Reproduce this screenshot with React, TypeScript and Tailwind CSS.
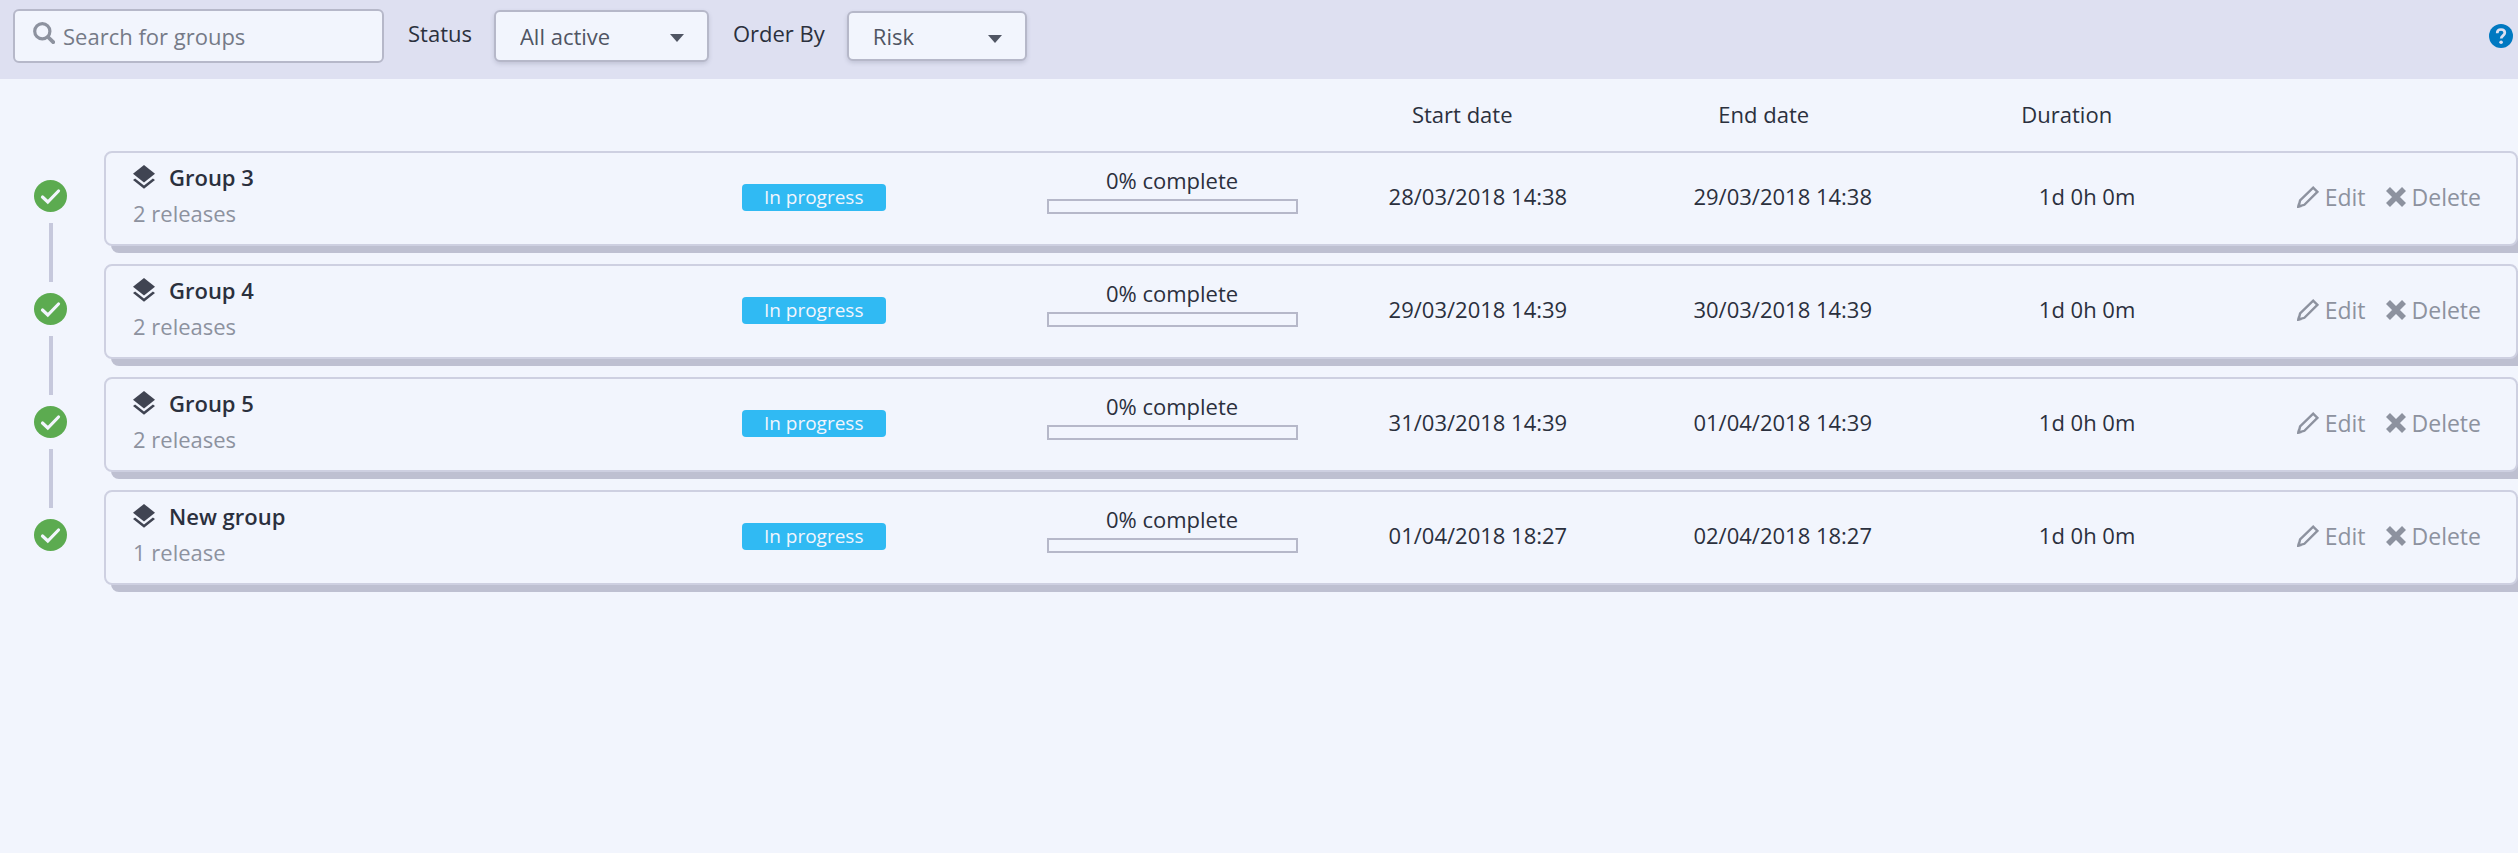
import { useState } from "react";

type Group = { name: string; releases: string; start: string; end: string };

const groups: Group[] = [
  { name: "Group 3", releases: "2 releases", start: "28/03/2018 14:38", end: "29/03/2018 14:38" },
  { name: "Group 4", releases: "2 releases", start: "29/03/2018 14:39", end: "30/03/2018 14:39" },
  { name: "Group 5", releases: "2 releases", start: "31/03/2018 14:39", end: "01/04/2018 14:39" },
  { name: "New group", releases: "1 release", start: "01/04/2018 18:27", end: "02/04/2018 18:27" },
];

const columns =
  "grid grid-cols-[609fr_305fr_251px_28fr_305fr_305fr_304fr_242px] pl-[27px] pr-[35px]";

function SearchIcon() {
  return (
    <svg viewBox="0 0 22 22" className="size-[22px]" fill="none" stroke="#8d929f">
      <circle cx="9.3" cy="9.3" r="7.6" strokeWidth="3.2" />
      <path d="M15 15l5.2 5.2" strokeWidth="3.8" strokeLinecap="round" />
    </svg>
  );
}

function CheckIcon() {
  return (
    <svg viewBox="0 0 33 32" className="h-8 w-[33px]">
      <ellipse cx="16.5" cy="16" rx="16.5" ry="16" fill="#5cab50" />
      <path
        d="M8.5 17l5.3 5L24.5 11"
        fill="none"
        stroke="#f2f5fd"
        strokeWidth="3.2"
        strokeLinecap="round"
        strokeLinejoin="miter"
      />
    </svg>
  );
}

function LayersIcon() {
  return (
    <svg viewBox="0 0 22 24" className="h-6 w-[22px]" fill="#404452">
      <path d="M11 0L22 8.7 11 17.4 0 8.7z" />
      <path d="M0 14.9l2.1-1.4L11 20.5l8.9-7 2.1 1.4L11 23.8z" />
    </svg>
  );
}

function PencilIcon() {
  return (
    <svg viewBox="0 0 22 22" className="size-[22px]" fill="none" stroke="#8d929f" strokeWidth="2.4">
      <path d="M1.6 20.4l1.5-6L16.2 1.7l4.2 4.1L7.4 18.8z" />
      <path d="M0 22l1-5L5 21z" fill="#8d929f" stroke="none" />
    </svg>
  );
}

function CrossIcon() {
  return (
    <svg viewBox="0 0 20 20" className="size-5" stroke="#8d929f" strokeWidth="5.6">
      <path d="M2 2l16 16M18 2L2 18" />
    </svg>
  );
}

function Dropdown({ id, options, size }: { id: string; options: string[]; size: string }) {
  return (
    <div className={`relative ${size}`}>
      <select
        id={id}
        className="size-full appearance-none rounded-md border-2 border-[#b6b8c9] bg-[#f2f5fd] pl-6 text-[#505563] shadow-[0_2px_4px_rgba(80,85,110,0.2)]"
      >
        {options.map((o) => (
          <option key={o}>{o}</option>
        ))}
      </select>
      <svg
        viewBox="0 0 14 8"
        className="pointer-events-none absolute top-6 right-[25px] h-2 w-3.5"
        fill="#505563"
      >
        <path d="M0 0h14L7 8z" />
      </svg>
    </div>
  );
}

export default function App() {
  const [query, setQuery] = useState("");
  const visible = groups.filter((g) => g.name.toLowerCase().includes(query.toLowerCase()));

  return (
    <div className="min-h-screen bg-[#f2f5fd] font-['Open_Sans',sans-serif] text-[22px] leading-[30px] text-[#2b303d]">
      <header className="flex h-[79px] items-start bg-[#dee0f1] pt-[9px] pr-[5px] pl-[13px]">
        <div className="flex h-[54px] w-[371px] items-center rounded-md border-2 border-[#b6b8c9] bg-[#f2f5fd] pl-[18px]">
          <label htmlFor="search" aria-label="Search for groups" className="pb-1.5">
            <SearchIcon />
          </label>
          <input
            id="search"
            type="text"
            value={query}
            onChange={(e) => setQuery(e.target.value)}
            placeholder="Search for groups"
            className="min-w-0 flex-1 bg-transparent pl-2 outline-none placeholder:text-[#757a87]"
          />
        </div>
        <label htmlFor="status" className="mr-[22px] ml-6 pt-[9px]">
          Status
        </label>
        <Dropdown id="status" options={["All active", "Completed"]} size="mt-px h-[52px] w-[215px]" />
        <label htmlFor="order" className="mr-[22px] ml-6 pt-[9px]">
          Order By
        </label>
        <Dropdown id="order" options={["Risk", "Start date", "End date"]} size="mt-0.5 h-[50px] w-[180px]" />
        <button type="button" aria-label="Help" className="mt-[15px] ml-auto">
          <svg viewBox="0 0 24 24" className="size-6">
            <circle cx="12" cy="12" r="12" fill="#0079c1" />
            <path
              d="M8.2 9.2C8.2 6.6 9.8 5.5 12 5.5s3.8 1.3 3.8 3.3c0 2.7-3.6 2.9-3.6 5.7"
              fill="none"
              stroke="#dee0f1"
              strokeWidth="2.7"
            />
            <circle cx="12.1" cy="18.2" r="1.8" fill="#dee0f1" />
          </svg>
        </button>
      </header>

      <main className="flex">
        <ol className="flex w-[104px] shrink-0 flex-col pt-[101px] pl-[34px]">
          {visible.map((g, i) => (
            <li key={g.name} className="flex w-[33px] flex-col items-center">
              <CheckIcon />
              {i < visible.length - 1 && <div className="my-[11px] h-[59px] w-1 bg-[#c6c8dc]" />}
            </li>
          ))}
        </ol>

        <table className="block min-w-0 flex-1">
          <thead className="block">
            <tr className={`${columns} h-[72px] pt-5`}>
              <td />
              <td />
              <td />
              <td />
              <th className="pr-8 font-normal">Start date</th>
              <th className="pr-10 font-normal">End date</th>
              <th className="pr-11 font-normal">Duration</th>
              <td />
            </tr>
          </thead>
          <tbody className="flex flex-col gap-[18px]">
            {visible.map((g) => (
              <tr
                key={g.name}
                className={`${columns} h-[95px] items-center rounded-lg border-2 border-[#ced0e1] bg-[#f2f5fd] shadow-[7px_7px_0_#bec0d1]`}
              >
                <td className="self-start pt-[9px]">
                  <div className="flex items-center gap-3.5 font-semibold">
                    <LayersIcon />
                    {g.name}
                  </div>
                  <div className="pt-1.5 text-[#8d929f]">{g.releases}</div>
                </td>
                <td className="pb-0.5">
                  <span className="block h-[27px] w-36 rounded-sm bg-[#30baf3] text-center text-[19px] leading-[26px] text-[#f2f5fd]">
                    In progress
                  </span>
                </td>
                <td className="self-start pt-3 text-center">
                  0% complete
                  <div className="mt-1 h-[15px] border-2 border-[#b6b8c9]" />
                </td>
                <td />
                <td className="pb-1.5 text-center">{g.start}</td>
                <td className="pb-1.5 text-center">{g.end}</td>
                <td className="pb-1.5 text-center">1d 0h 0m</td>
                <td className="flex justify-end gap-5 pb-1 text-[23px] text-[#8d929f]">
                  <button type="button" className="flex items-center gap-1.5">
                    <PencilIcon />
                    Edit
                  </button>
                  <button type="button" className="flex items-center gap-1.5">
                    <CrossIcon />
                    Delete
                  </button>
                </td>
              </tr>
            ))}
          </tbody>
        </table>
      </main>
    </div>
  );
}
